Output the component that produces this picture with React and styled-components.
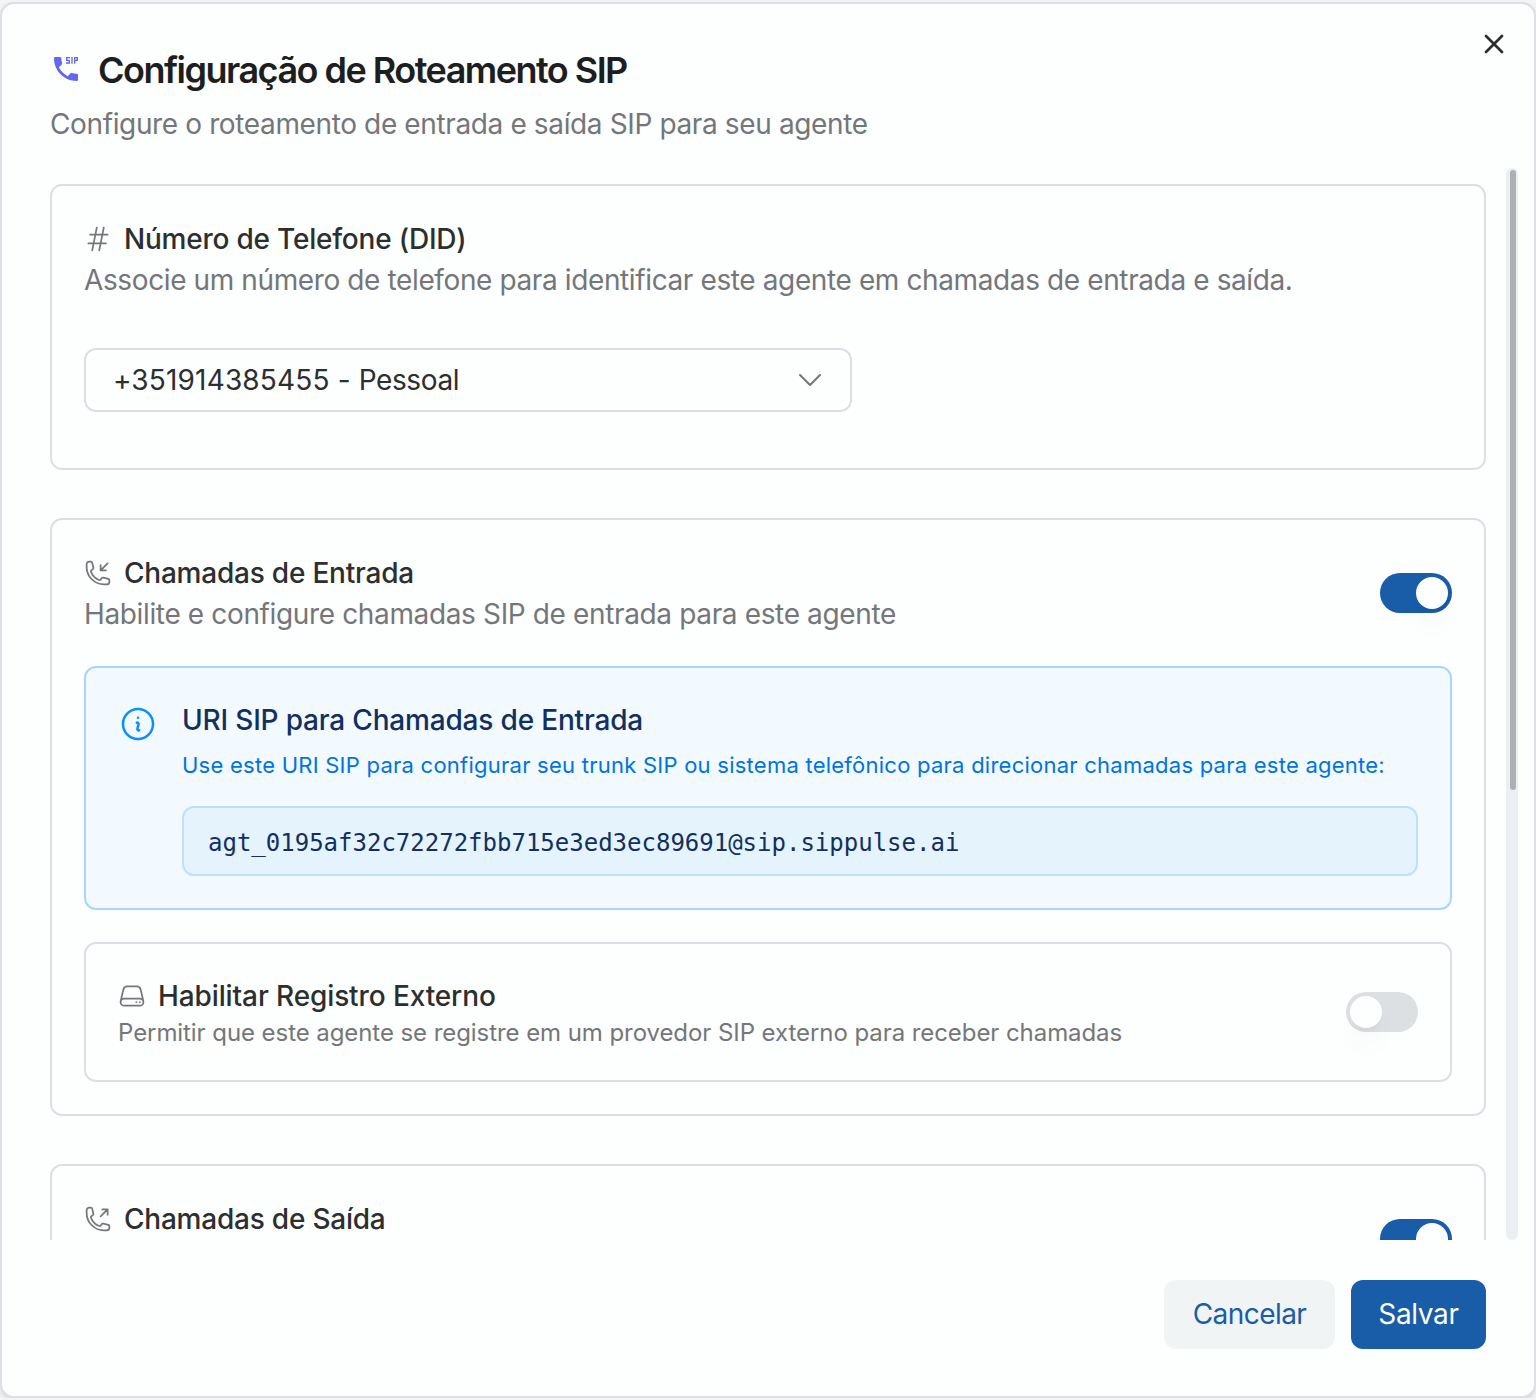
import React from 'react';
import styled, { createGlobalStyle } from 'styled-components';
import { MdDialerSip } from 'react-icons/md';
import {
  HiOutlineHashtag, HiOutlinePhoneArrowDownLeft, HiOutlinePhoneArrowUpRight,
  HiOutlineServer, HiOutlineInformationCircle, HiOutlineChevronDown,
} from 'react-icons/hi2';
import { X } from 'lucide-react';

const GlobalStyle = createGlobalStyle`
  *, *::before, *::after { box-sizing: border-box; }
  body { margin: 0; background: #f4f5f6; font-family: Inter, "Liberation Sans", sans-serif; color: #2c2e30; }
  h1, h2, h3, p { margin: 0; }
  button { font: inherit; border: 0; cursor: pointer; }
  svg { flex: none; display: block; }
`;

const Dialog = styled.main`
  width: 1536px;
  height: 1396px;
  margin-top: 2px;
  display: flex;
  flex-direction: column;
  background: #fdfefe;
  border: 2px solid #dddfe4;
  border-radius: 14px;
  box-shadow: 0 2px 4px rgba(0, 0, 0, 0.12);
`;
const Header = styled.header`
  display: flex;
  justify-content: space-between;
  align-items: flex-start;
  height: 164px;
  padding: 23.5px 24px 0 48px;
`;
const TitleRow = styled.div`
  display: flex;
  align-items: center;
  gap: 16px;
  height: 48px;
  margin-top: 18.5px;
  color: #6366f1;
  svg { margin-bottom: 2px; }
`;
const Title = styled.h1`
  font-size: 36px;
  line-height: 48px;
  font-weight: 600;
  letter-spacing: -1.52px;
  color: #1c1e20;
`;
const Subtitle = styled.p`
  margin-top: 10px;
  font-size: 28px;
  line-height: 40px;
  letter-spacing: -0.37px;
  color: #74767a;
`;
const CloseButton = styled.button`
  padding: 0;
  background: none;
  color: #2c2e30;
`;
const Body = styled.div`
  display: flex;
  height: 1071.5px;
  padding: 0 16px 0 48px;
  overflow: hidden;
`;
const Sections = styled.div`
  flex: 1;
  display: flex;
  flex-direction: column;
  gap: 48px;
  padding-top: 16px;
  margin-right: 20px;
  min-width: 0;
`;
const Track = styled.div`
  width: 12px;
  padding: 2px 2px 0 4px;
  border-radius: 6px;
  background: #ebeff2;
`;
const Thumb = styled.div`
  height: 620px;
  border-radius: 3px;
  background: #adb1b4;
`;
const Card = styled.section`
  flex: none;
  min-height: ${p => p.$min || 0}px;
  padding: 32px;
  border: 2px solid #dddfe4;
  border-radius: 12px;
`;
const CardHead = styled.div`
  display: flex;
  justify-content: space-between;
  align-items: center;
  min-height: ${p => p.$min || 0}px;
`;
const HeadingRow = styled.div`
  display: flex;
  align-items: center;
  align-self: ${p => (p.$top ? 'flex-start' : 'auto')};
  gap: 12px;
  height: ${p => p.$h || 42}px;
  color: #74767a;
`;
const Heading = styled.h2`
  font-size: 28px;
  line-height: 40px;
  font-weight: 500;
  letter-spacing: ${p => (p.$wide ? -0.11 : -0.22)}px;
  color: #2c2e30;
`;
const Description = styled.p`
  font-size: 28px;
  line-height: 40px;
  letter-spacing: ${p => (p.$long ? -0.385 : -0.36)}px;
  color: #74767a;
`;
const SmallDescription = styled.p`
  padding-top: 1px;
  font-size: 24px;
  line-height: 31px;
  letter-spacing: -0.07px;
  color: #74767a;
`;
const Select = styled.div`
  display: flex;
  align-items: center;
  justify-content: space-between;
  width: 768px;
  height: 64px;
  margin-top: 48px;
  padding: 0 24px 0 27px;
  border: 2px solid #dddfe4;
  border-radius: 12px;
  font-size: 28px;
  letter-spacing: 0.16px;
  svg { color: #74767a; }
`;
const SelectLabel = styled.span`
  letter-spacing: -0.4px;
`;
const Switch = styled.button`
  display: flex;
  flex: none;
  justify-content: ${p => (p.$on ? 'flex-end' : 'flex-start')};
  width: 72px;
  height: 40px;
  padding: 4px;
  border-radius: 20px;
  background: ${p => (p.$on ? '#195ca8' : '#dde0e3')};
`;
const Knob = styled.span`
  width: 32px;
  height: 32px;
  border-radius: 50%;
  background: #fdfefe;
  box-shadow: 0 20px 30px -6px rgba(0, 0, 0, 0.06), 0 8px 12px -8px rgba(0, 0, 0, 0.1);
`;
const Notice = styled.div`
  display: flex;
  gap: 24px;
  height: 244px;
  margin-top: 32px;
  padding: 32px;
  border: 2px solid #a9d6fc;
  border-radius: 12px;
  background: #f2f9ff;
  > svg { margin-top: 4px; color: #0a8fff; }
`;
const NoticeBody = styled.div`
  flex: 1;
`;
const NoticeTitle = styled.h3`
  font-size: 28px;
  line-height: 40px;
  font-weight: 500;
  letter-spacing: -0.18px;
  color: #12305f;
`;
const NoticeText = styled.p`
  margin-top: 7px;
  font-size: 22px;
  line-height: 36px;
  letter-spacing: 0.245px;
  white-space: nowrap;
  color: #0074dd;
`;
const Code = styled.div`
  height: 70px;
  margin-top: 23px;
  padding: 1px 24px 0;
  border: 2px solid #bbe1fb;
  border-radius: 12px;
  background: #e5f3fd;
  font-family: "DejaVu Sans Mono", monospace;
  font-size: 24px;
  line-height: 68px;
  color: #12305f;
`;
const Panel = styled.div`
  margin-top: 32px;
  padding: 32px;
  border: 2px solid #dddfe4;
  border-radius: 12px;
`;
const Footer = styled.footer`
  display: flex;
  justify-content: flex-end;
  gap: 16px;
  padding: 40px 48px 0;
`;
const Button = styled.button`
  width: ${p => (p.$primary ? 135 : 171)}px;
  height: 69px;
  padding: 0;
  border-radius: 12px;
  font-size: 28px;
  letter-spacing: ${p => (p.$primary ? -0.35 : -0.55)}px;
  background: ${p => (p.$primary ? '#195ca8' : '#f1f4f5')};
  color: ${p => (p.$primary ? '#fdfefe' : '#195ca8')};
`;

function Toggle({ on }) {
  return <Switch $on={on} role="switch" aria-checked={!!on}><Knob /></Switch>;
}

export default function App() {
  return (
    <>
      <GlobalStyle />
      <Dialog>
        <Header>
          <div>
            <TitleRow><MdDialerSip size={32} /><Title>Configuração de Roteamento SIP</Title></TitleRow>
            <Subtitle>Configure o roteamento de entrada e saída SIP para seu agente</Subtitle>
          </div>
          <CloseButton aria-label="Fechar"><X size={32} /></CloseButton>
        </Header>
        <Body>
          <Sections>
            <Card $min={286}>
              <HeadingRow><HiOutlineHashtag size={28} /><Heading>Número de Telefone (DID)</Heading></HeadingRow>
              <Description $long>Associe um número de telefone para identificar este agente em chamadas de entrada e saída.</Description>
              <Select>
                <span>+351914385455 - <SelectLabel>Pessoal</SelectLabel></span>
                <HiOutlineChevronDown size={32} />
              </Select>
            </Card>
            <Card>
              <CardHead>
                <div>
                  <HeadingRow><HiOutlinePhoneArrowDownLeft size={28} /><Heading>Chamadas de Entrada</Heading></HeadingRow>
                  <Description>Habilite e configure chamadas SIP de entrada para este agente</Description>
                </div>
                <Toggle on />
              </CardHead>
              <Notice>
                <HiOutlineInformationCircle size={40} />
                <NoticeBody>
                  <NoticeTitle>URI SIP para Chamadas de Entrada</NoticeTitle>
                  <NoticeText>Use este URI SIP para configurar seu trunk SIP ou sistema telefônico para direcionar chamadas para este agente:</NoticeText>
                  <Code>agt_0195af32c72272fbb715e3ed3ec89691@sip.sippulse.ai</Code>
                </NoticeBody>
              </Notice>
              <Panel>
                <CardHead>
                  <div>
                    <HeadingRow $h={40}><HiOutlineServer size={28} /><Heading $wide>Habilitar Registro Externo</Heading></HeadingRow>
                    <SmallDescription>Permitir que este agente se registre em um provedor SIP externo para receber chamadas</SmallDescription>
                  </div>
                  <Toggle />
                </CardHead>
              </Panel>
            </Card>
            <Card>
              <CardHead $min={82}>
                <HeadingRow $top><HiOutlinePhoneArrowUpRight size={28} /><Heading>Chamadas de Saída</Heading></HeadingRow>
                <Toggle on />
              </CardHead>
            </Card>
          </Sections>
          <Track><Thumb /></Track>
        </Body>
        <Footer>
          <Button>Cancelar</Button>
          <Button $primary>Salvar</Button>
        </Footer>
      </Dialog>
    </>
  );
}
